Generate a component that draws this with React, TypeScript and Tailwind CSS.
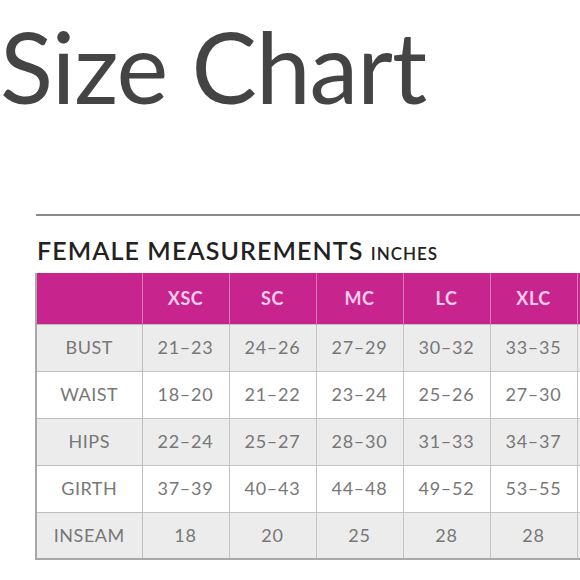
import React from "react";

const sizes = ["XSC", "SC", "MC", "LC", "XLC"];
const rows: [string, string[]][] = [
  ["BUST", ["21–23", "24–26", "27–29", "30–32", "33–35"]],
  ["WAIST", ["18–20", "21–22", "23–24", "25–26", "27–30"]],
  ["HIPS", ["22–24", "25–27", "28–30", "31–33", "34–37"]],
  ["GIRTH", ["37–39", "40–43", "44–48", "49–52", "53–55"]],
  ["INSEAM", ["18", "20", "25", "28", "28"]],
];

export default function App() {
  return (
    <div
      className="w-[580px] h-[580px] overflow-hidden bg-white"
      style={{ fontFamily: "Lato, 'Open Sans', sans-serif" }}
    >
      <div className="pt-[17px] text-[98px] leading-[98px] text-[#444444] tracking-[-1px]">
        Size Chart
      </div>
      <div className="mt-[99px] pl-[35px]">
        <div className="ml-[1px] border-t-2 border-[#8a8a8a]" />
        <div className="mt-[22px] mb-[10px] pl-[2px] h-[25px] text-[25px] leading-[25px] text-[#222222] font-semibold tracking-[1.1px] whitespace-nowrap">
          FEMALE MEASUREMENTS{" "}
          <span className="text-[17px] tracking-[1px]">INCHES</span>
        </div>
        <table className="border-collapse table-fixed w-[553px] border-l-2 border-b-2 border-[#a8a8a8]">
          <colgroup>
            <col className="w-[106px]" />
            {sizes.map((s) => (
              <col key={s} className="w-[87px]" />
            ))}
            <col className="w-[12px]" />
          </colgroup>
          <thead>
            <tr className="h-[51px] bg-[#c8248e]">
              <th className="border-r border-[#d77bb8]" />
              {sizes.map((s) => (
                <th
                  key={s}
                  className="border-r border-[#d77bb8] text-[18px] font-bold text-[#f9cdea] tracking-[0.5px] text-center"
                >
                  {s}
                </th>
              ))}
              <th />
            </tr>
          </thead>
          <tbody>
            {rows.map(([label, vals], i) => (
              <tr
                key={label}
                className={`h-[47px] ${i % 2 === 0 ? "bg-[#ececec]" : "bg-white"}`}
              >
                <td className="border border-l-0 border-[#bdbdbd] text-center text-[18px] text-[#777777] tracking-[0.5px]">
                  {label}
                </td>
                {vals.map((v, j) => (
                  <td
                    key={j}
                    className="border border-[#c4c4c4] text-center text-[18px] text-[#777777] tracking-[0.8px]"
                  >
                    {v}
                  </td>
                ))}
                <td className="border-t border-b border-[#c4c4c4]" />
              </tr>
            ))}
          </tbody>
        </table>
      </div>
    </div>
  );
}
